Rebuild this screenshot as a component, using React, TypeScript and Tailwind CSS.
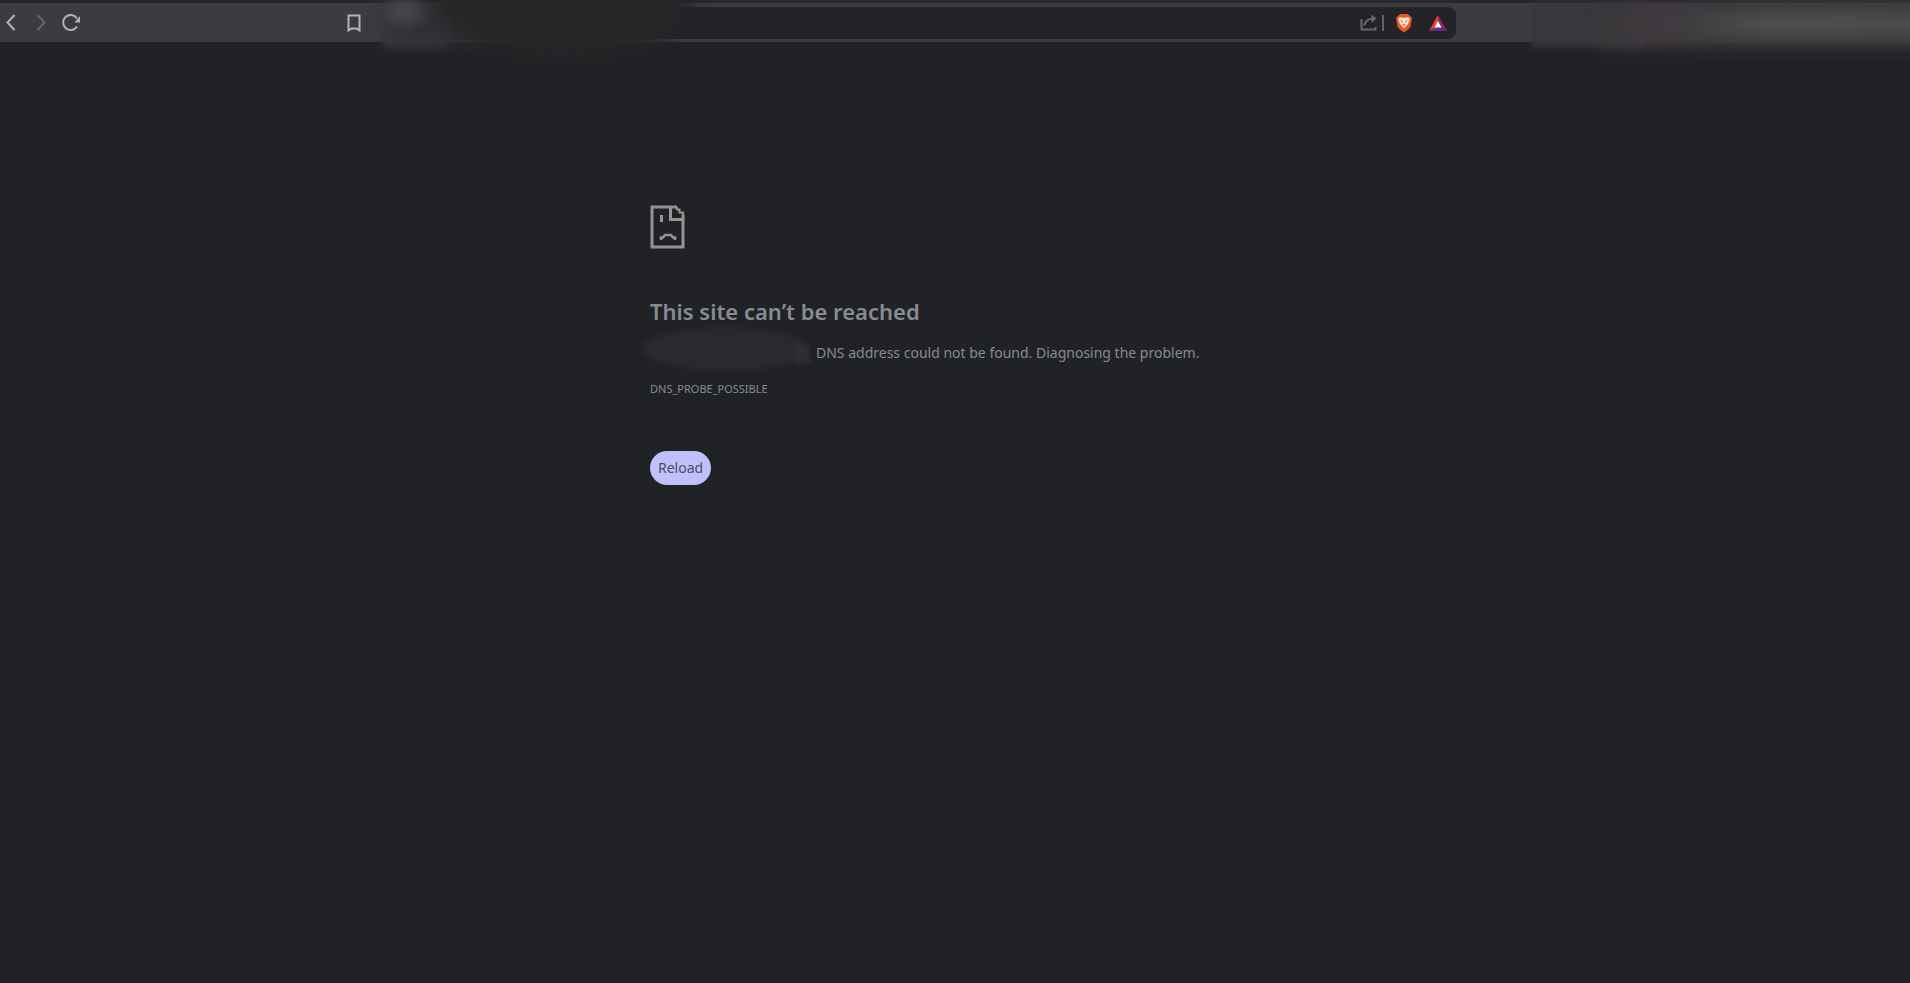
import React from 'react';

interface IconButtonProps {
  label: string;
  className?: string;
  children: React.ReactNode;
}

const IconButton: React.FC<IconButtonProps> = ({ label, className = '', children }) => (
  <button type="button" aria-label={label} className={`flex items-center justify-center ${className}`}>
    {children}
  </button>
);

const SadPageIcon: React.FC = () => (
  <svg width="36" height="44" viewBox="0 0 36 44" fill="none" stroke="#949495" strokeWidth="3">
    <path d="M27 2H2V42H33V9.500" />
    <path d="M20.500 2V14.500H33" />
    <path d="M27 2V4.500H29.500V7.500H33V10" strokeWidth="2" />
    <path d="M11.500 10V17" />
    <path d="M11 35V32.500H13L15 30H21L23 32.500H25V35" strokeWidth="2.500" />
  </svg>
);

const Toolbar: React.FC = () => (
  <header className="relative border-t-[3px] border-[#27262b] bg-[#3c3b3f]">
    <div className="flex h-[39px] items-center text-[#b4b4b7]">
      <div className="flex w-[372px] items-center justify-between pr-2">
        <div className="flex gap-2">
          <IconButton label="Back" className="w-[22px]">
            <svg width="10" height="17" viewBox="0 0 10 17" fill="none" stroke="currentColor" strokeWidth="2">
              <path d="M8.500 1L1.500 8.500L8.500 16" />
            </svg>
          </IconButton>
          <IconButton label="Forward" className="w-[22px] text-[#67666a]">
            <svg width="10" height="17" viewBox="0 0 10 17" fill="none" stroke="currentColor" strokeWidth="2">
              <path d="M1.500 1L8.500 8.500L1.500 16" />
            </svg>
          </IconButton>
          <IconButton label="Reload page" className="w-[22px]">
            <svg width="18" height="18" viewBox="0 0 18 18" fill="none" stroke="currentColor" strokeWidth="2">
              <path d="M15 12.500A7.500 7.500 0 1 1 15 4.500" />
              <path d="M18 2V8.500H12.500Z" fill="currentColor" stroke="none" />
            </svg>
          </IconButton>
        </div>
        <IconButton label="Bookmark this tab" className="w-5">
          <svg width="14" height="18" viewBox="0 0 14 18" fill="none" stroke="currentColor" strokeWidth="2">
            <path d="M1.500 1.500H12.500V16.500L9.500 14.500H4.500L1.500 16.500Z" />
          </svg>
        </IconButton>
      </div>

      <div className="flex h-8 flex-1 items-center rounded-lg bg-[#242328] pr-2">
        <input aria-label="Address" className="h-full min-w-0 flex-1 bg-transparent px-3 text-sm outline-none" />
        <IconButton label="Share" className="w-5 text-[#69686c]">
          <svg width="17" height="17" viewBox="0 0 17 17" fill="none" stroke="currentColor" strokeWidth="2">
            <path d="M1.500 5V15.500H15.500V13" />
            <path d="M4 11.500Q6 5 13 4.500" />
            <path d="M11.500 0.500L16.500 4.500L11.500 9Z" fill="currentColor" stroke="none" />
          </svg>
        </IconButton>
        <span className="mx-1 h-4 w-[2px] bg-[#626165]" />
        <IconButton label="Shields" className="ml-1 w-6">
          <svg width="18" height="20" viewBox="0 0 18 20">
            <path d="M5 1H13L17 5L15.500 13.500Q14.500 16 9 19.500Q3.500 16 2.500 13.500L1 5Z" fill="#e8581f" />
            <path d="M5 4L9 5L13 4L15 6L13 11L9 15.500L5 11L3 6Z" fill="#fbe3d8" />
            <path d="M5 7L8 8L7.500 10ZM13 7L10 8L10.500 10ZM7 11.500L9 10.500L11 11.500L9 13Z" fill="#ee7a48" />
          </svg>
        </IconButton>
        <IconButton label="Rewards" className="ml-3 w-5">
          <svg width="18" height="16" viewBox="0 0 18 16">
            <path d="M9 0L0 16L9 11Z" fill="#f0452a" />
            <path d="M9 0L18 16L9 11Z" fill="#96215f" />
            <path d="M0 16L9 11L18 16Z" fill="#5b3193" />
            <path d="M9 6L12.500 12.500H5.500Z" fill="#fff" />
          </svg>
        </IconButton>
      </div>
      <div className="w-[454px]" />
    </div>

    {/* smudges over the address and the extensions */}
    <div className="pointer-events-none absolute -top-[3px] left-[366px] h-20 w-[380px] overflow-hidden">
      <div className="absolute top-[3px] left-0 h-[39px] w-12 bg-[#3b3a3e]" />
      <div className="absolute top-1 left-4 h-11 w-16 bg-[#37363a] blur-[4px]" />
      <div className="absolute top-3 left-8 h-8 w-20 bg-[#323135] blur-[8px]" />
      <div className="absolute top-0 left-5 h-6 w-9 rounded-full bg-[#47464a] blur-[6px]" />
      <div className="absolute -top-16 left-[64px] h-[120px] w-[264px] rounded-[50%] bg-[#262729] blur-[10px]" />
      <div className="absolute -top-10 left-[110px] h-[84px] w-[190px] rounded-3xl bg-[#262729] blur-[10px]" />
    </div>
    <div className="pointer-events-none absolute -top-[3px] right-0 h-16 w-[390px] overflow-hidden">
      <div className="absolute top-1 left-3 h-[43px] w-28 bg-[#38373b] blur-[3px]" />
      <div className="absolute top-1 -right-5 left-[80px] h-11 bg-[#3a393c] blur-[8px]" />
      <div className="absolute top-3 left-[104px] h-6 w-16 rounded-full bg-[#433a40] blur-[10px]" />
      <div className="absolute top-3 -right-8 left-[140px] h-6 bg-linear-to-r from-transparent via-[#515153] via-40% to-[#4c4c4e] blur-[8px]" />
    </div>
  </header>
);

const App: React.FC = () => (
  <div className="min-h-screen bg-[#212225] font-['Noto_Sans','Open_Sans',sans-serif] text-[#868c92]">
    <Toolbar />
    <main className="mx-auto max-w-[610px] pt-[163px]">
      <SadPageIcon />
      <h1 className="mt-[46px] text-[22px] leading-8 font-semibold">This site can’t be reached</h1>
      <div className="relative mt-2 flex h-9 items-center text-sm">
        <div className="absolute -top-2 -left-2 h-11 w-[168px] rounded-[50%] bg-[#292a2d] blur-[2px]" />
        <div className="absolute top-2 left-[144px] h-5 w-4 rounded-tr-full bg-[#2e2f32] blur-[2px]" />
        <p className="relative ml-[166px]">DNS address could not be found. Diagnosing the problem.</p>
      </div>
      <p className="mt-2 text-[11px] leading-5">DNS_PROBE_POSSIBLE</p>
      <button type="button" className="mt-[52px] h-[34px] rounded-full bg-[#c0c0fc] px-2 text-sm text-[#4b4b6b]">
        Reload
      </button>
    </main>
  </div>
);

export default App;
